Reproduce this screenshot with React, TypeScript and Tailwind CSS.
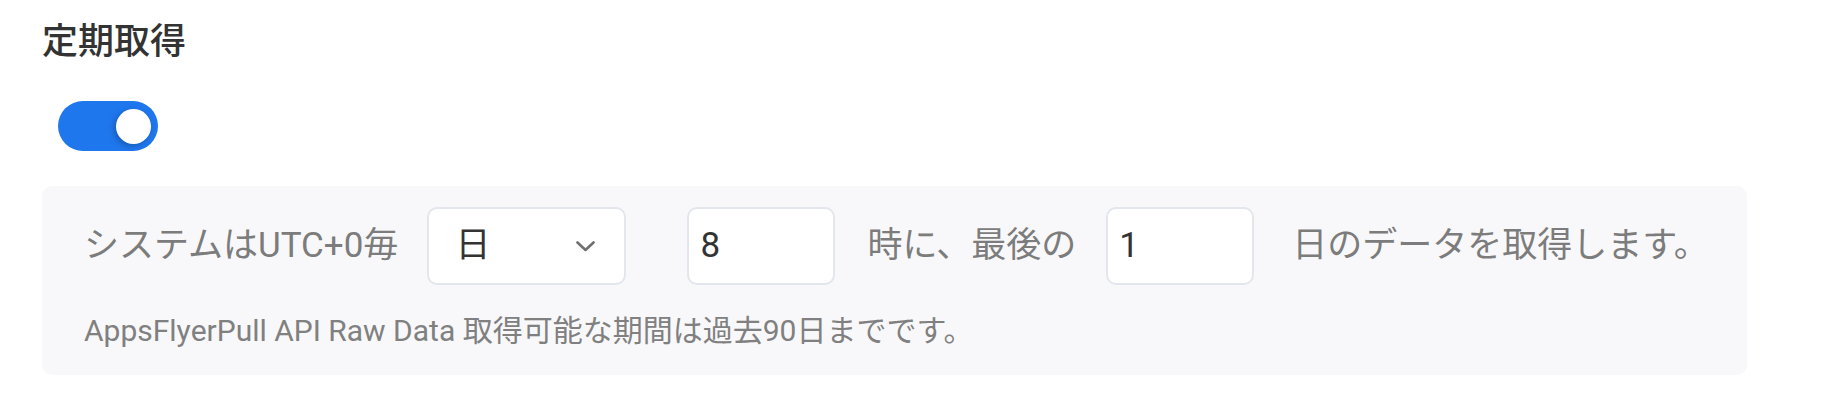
import React from "react";

const font = { fontFamily: 'Roboto, "Noto Sans CJK JP", "Noto Sans", sans-serif' };

export default function App() {
  return (
    <div className="min-h-[402px] w-[1826px] bg-white pl-[42px] pt-[15px]" style={font}>
      <h2 className="text-[36px] leading-[54px] font-medium text-[#333333]">定期取得</h2>
      <div className="ml-[16px] mt-[32px] flex h-[50px] w-[100px] items-center justify-end rounded-full bg-[#1f77ee] pr-[7px]">
        <div className="h-[35px] w-[35px] rounded-full bg-white shadow-[-2px_2px_6px_rgba(0,0,0,0.25)]" />
      </div>
      <div className="mt-[35px] w-[1705px] rounded-[10px] bg-[#f8f8fa] pl-[42px] pt-[21px] pb-[22px]">
        <div className="flex h-[78px] items-center text-[35px] text-[#7c7c7c]">
          <span>システムはUTC+0毎</span>
          <div className="ml-[29px] flex h-[78px] w-[199px] items-center justify-between rounded-[10px] border-2 border-[#e3e6ec] bg-white pl-[26px] pr-[29px] text-[#333333]">
            <span>日</span>
            <svg width="19" height="11" viewBox="0 0 19 11" fill="none">
              <polyline points="1.5,1.5 9.5,9 17.5,1.5" stroke="#707070" strokeWidth="2.6" strokeLinecap="round" strokeLinejoin="round" />
            </svg>
          </div>
          <div className="ml-[61px] flex h-[78px] w-[148px] items-center rounded-[10px] border-2 border-[#e3e6ec] bg-white pl-[11px] text-[#333333]">
            8
          </div>
          <span className="ml-[32px]">時に、最後の</span>
          <div className="ml-[30px] flex h-[78px] w-[148px] items-center rounded-[10px] border-2 border-[#e3e6ec] bg-white pl-[11px] text-[#333333]">
            1
          </div>
          <span className="ml-[38px]">日のデータを取得します。</span>
        </div>
        <div className="mt-[24px] text-[30px] leading-[44px] text-[#808080]">
          AppsFlyerPull API Raw Data 取得可能な期間は過去90日までです。
        </div>
      </div>
    </div>
  );
}
